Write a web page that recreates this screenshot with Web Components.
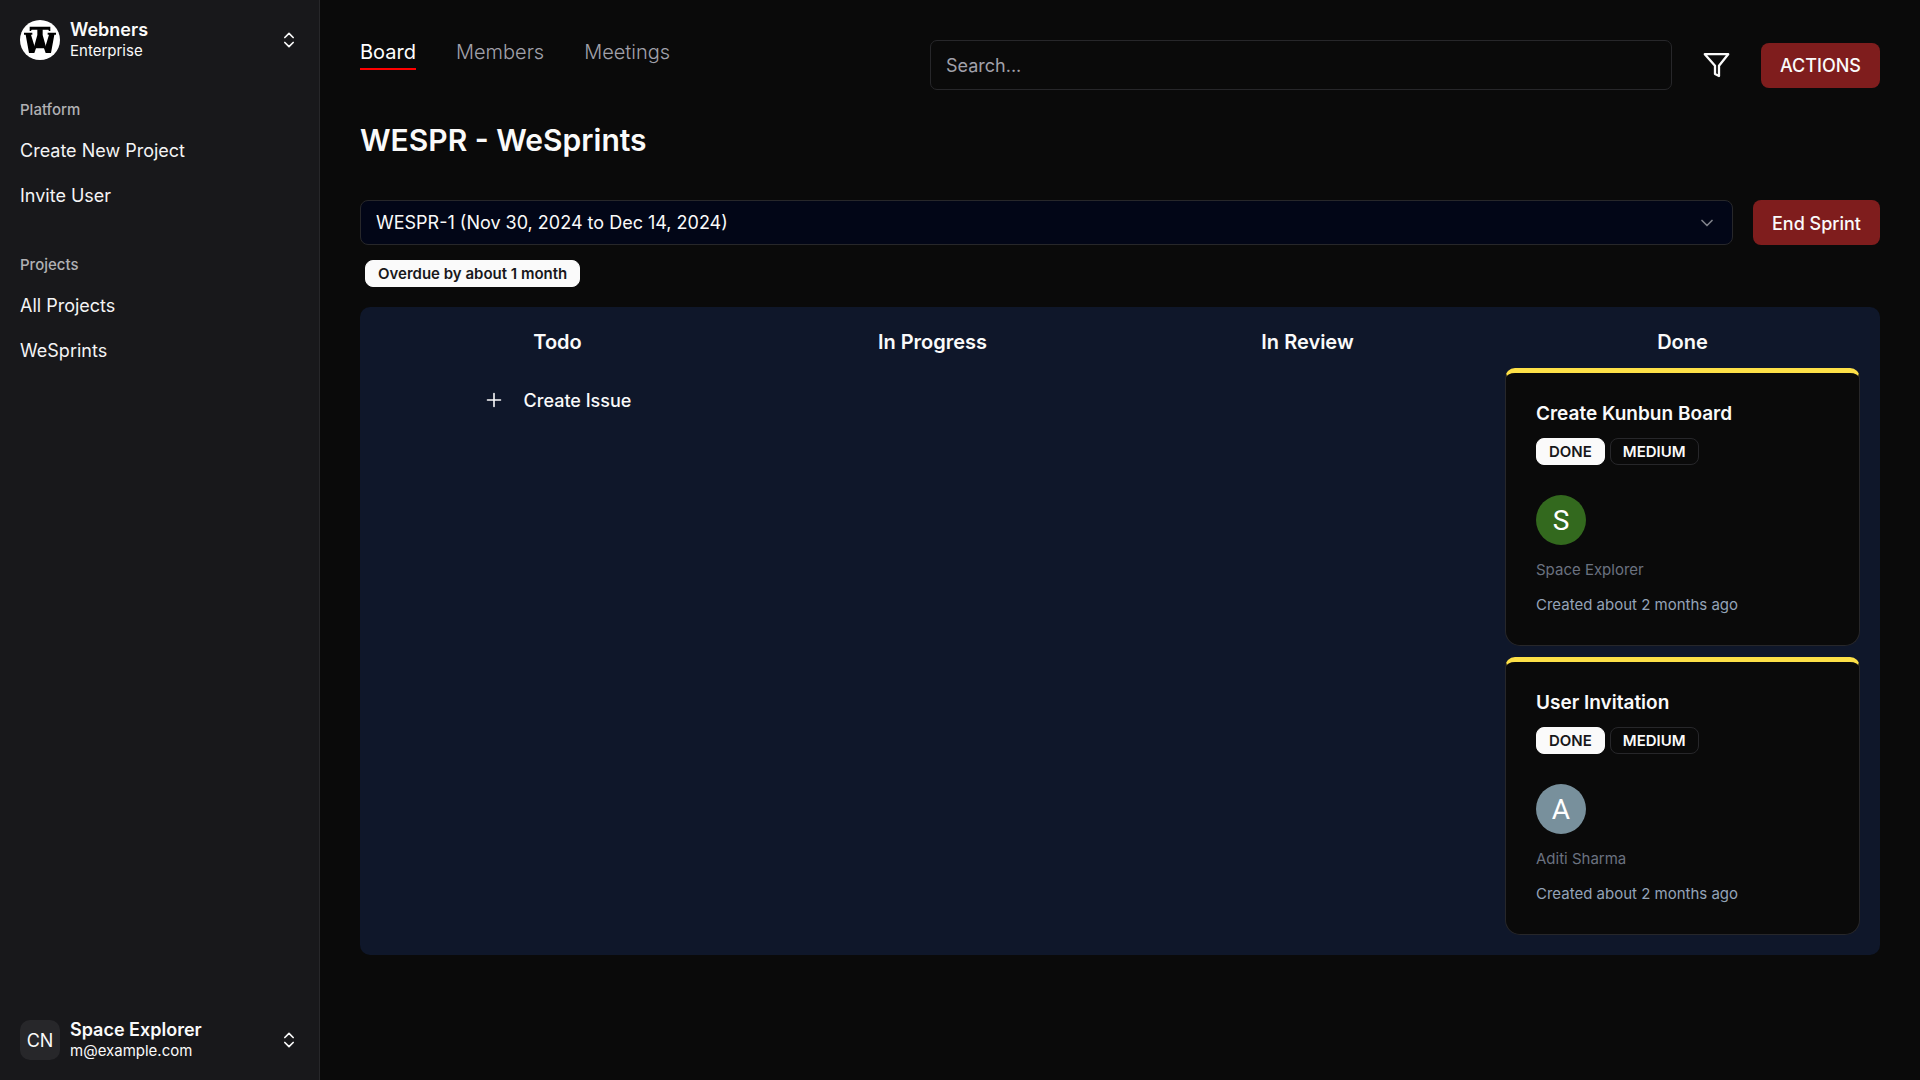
<!DOCTYPE html>
<html lang="en">
<head>
<meta charset="utf-8">
<title>WeSprints</title>
<style>
html, body { margin: 0; }
body { background: #0a0a0a; color: #fafafa; font-family: Inter, "Liberation Sans", sans-serif; font-size: 18px; line-height: 25px; }
</style>
</head>
<body>
<app-shell>
  <app-sidebar slot="sidebar">
    <account-switcher slot="header" name="Webners" detail="Enterprise"><brand-logo></brand-logo></account-switcher>
    <nav-group label="Platform">
      <nav-item>Create New Project</nav-item>
      <nav-item>Invite User</nav-item>
    </nav-group>
    <nav-group label="Projects">
      <nav-item>All Projects</nav-item>
      <nav-item>WeSprints</nav-item>
    </nav-group>
    <account-switcher slot="footer" name="Space Explorer" detail="m@example.com"><initials-box>CN</initials-box></account-switcher>
  </app-sidebar>
  <board-toolbar>
    <tab-link slot="tabs" active>Board</tab-link>
    <tab-link slot="tabs">Members</tab-link>
    <tab-link slot="tabs">Meetings</tab-link>
    <action-button slot="actions">ACTIONS</action-button>
  </board-toolbar>
  <page-title>WESPR - WeSprints</page-title>
  <sprint-bar sprint="WESPR-1 (Nov 30, 2024 to Dec 14, 2024)">
    <action-button slot="action">End Sprint</action-button>
    <ui-badge slot="status">Overdue by about 1 month</ui-badge>
  </sprint-bar>
  <kanban-board>
    <kanban-column heading="Todo"><create-issue>Create Issue</create-issue></kanban-column>
    <kanban-column heading="In Progress"></kanban-column>
    <kanban-column heading="In Review"></kanban-column>
    <kanban-column heading="Done">
      <issue-card heading="Create Kunbun Board" assignee="Space Explorer" color="#33691e" created="Created about 2 months ago">
        <ui-badge slot="badges">DONE</ui-badge><ui-badge slot="badges" outline>MEDIUM</ui-badge>
      </issue-card>
      <issue-card heading="User Invitation" assignee="Aditi Sharma" color="#78909c" created="Created about 2 months ago">
        <ui-badge slot="badges">DONE</ui-badge><ui-badge slot="badges" outline>MEDIUM</ui-badge>
      </issue-card>
    </kanban-column>
  </kanban-board>
</app-shell>

<script>
const base = `<style>
*, *::before { box-sizing: border-box; }
:host { display: block; box-sizing: border-box; }
h1, h2, h3, p { margin: 0; }
button, input, select { font: inherit; color: inherit; margin: 0; }
button { border: 0; background: none; padding: 0; cursor: pointer; }
a { color: inherit; text-decoration: none; }
svg { display: block; flex: none; fill: none; stroke: currentColor; stroke-width: 2; stroke-linecap: round; stroke-linejoin: round; }
</style>`;

const define = (name, render) => customElements.define(name, class extends HTMLElement {
  constructor() { super(); this.attachShadow({ mode: 'open' }); }
  connectedCallback() {
    this.shadowRoot.innerHTML = base + render(key => this.getAttribute(key) || '');
  }
});

define('app-shell', () => `<style>
:host { display: flex; min-height: 100vh; }
main { flex: 1; min-width: 0; padding: 40px; }
</style><slot name="sidebar"></slot><main><slot></slot></main>`);

define('app-sidebar', () => `<style>
:host { display: flex; flex-direction: column; width: 320px; flex: none; background: #18181b; border-right: 1px solid #27272a; }
nav { flex: 1; display: flex; flex-direction: column; gap: 8px; }
</style><slot name="header"></slot><nav><slot></slot></nav><slot name="footer"></slot>`);

define('account-switcher', a => `<style>
:host { padding: 10px; }
button { display: flex; align-items: center; gap: 10px; width: 100%; height: 60px; padding: 10px; text-align: left; }
.text { flex: 1; display: flex; flex-direction: column; }
.name { font-size: 18px; line-height: 22px; font-weight: 600; }
.detail { font-size: 15px; line-height: 20px; }
</style><button type="button"><slot></slot><span class="text"><span class="name">${a('name')}</span><span class="detail">${a('detail')}</span></span>
<svg width="20" height="20" viewBox="0 0 24 24"><path d="m7 15 5 5 5-5M7 9l5-5 5 5"/></svg></button>`);

define('brand-logo', () => `<style>:host { width: 40px; height: 40px; flex: none; }</style>
<svg width="40" height="40" viewBox="0 0 120 120" role="img" aria-label="Webners logo"><circle cx="60" cy="60" r="60" fill="#fff" stroke="none"/>
<g fill="#000" stroke="none">
<path d="M29 20h62v13h-4l-2-4H35l-2 4h-4z"/>
<path d="M52 28h16v17l10 36-4 4H46l-4-4 10-36z"/>
<path d="M12 38h25v6h-4l11 36 8-10h16l8 10 11-36h-4v-6h25v6h-5L93 99H77l-6-17H49l-6 17H27L17 44h-5z"/></g></svg>`);

define('initials-box', () => `<style>
:host { display: flex; align-items: center; justify-content: center; width: 40px; height: 40px; flex: none; border-radius: 10px; background: #27272a; font-size: 18px; }
</style><slot></slot>`);

define('nav-group', a => `<style>
:host { padding: 10px 20px; }
h2 { font-size: 15px; font-weight: 500; line-height: 40px; color: #b0b0b3; }
.items { display: flex; flex-direction: column; gap: 3px; }
</style><h2>${a('label')}</h2><div class="items"><slot></slot></div>`);

define('nav-item', () => `<style>
a { display: block; font-size: 18px; line-height: 42px; color: #f4f4f5; }
</style><a href="#"><slot></slot></a>`);

define('board-toolbar', () => `<style>
:host { display: flex; align-items: center; justify-content: space-between; gap: 20px; }
nav { display: flex; gap: 40px; align-self: flex-start; }
.tools { display: flex; align-items: center; gap: 31px; width: 950px; }
input { flex: 1; min-width: 0; height: 50px; padding: 0 15px; border: 1px solid #27272a; border-radius: 7px; background: transparent; font-size: 18px; }
input::placeholder { color: #a1a1aa; opacity: 1; }
</style><nav><slot name="tabs"></slot></nav><div class="tools"><input type="search" aria-label="Search" placeholder="Search...">
<button type="button" aria-label="Filter"><svg width="27" height="27" viewBox="0 0 27 27"><path d="M1.800 2.200h23.400L16 13.800V24l-4-2v-8.200Z" stroke-width="2.300"/></svg></button><slot name="actions"></slot></div>`);

define('tab-link', () => `<style>
a { display: block; padding-bottom: 3px; border-bottom: 2px solid transparent; font-size: 20px; line-height: 25px; font-weight: 300; color: #a1a1aa; }
:host([active]) a { color: #fff; font-weight: 400; border-color: #f00; }
</style><a href="#"><slot></slot></a>`);

define('action-button', () => `<style>
:host { flex: none; }
button { display: block; height: 45px; padding: 1px 19px 0; border-radius: 8px; background: #7f1d1d; font-size: 18px; font-weight: 500; white-space: nowrap; }
</style><button type="button"><slot></slot></button>`);

define('page-title', () => `<style>
:host { padding: 30px 0 40px; }
h1 { font-size: 30px; line-height: 40px; font-weight: 600; }
</style><h1><slot></slot></h1>`);

define('sprint-bar', a => `<style>
.row { display: flex; gap: 20px; }
.field { flex: 1; display: grid; align-items: center; min-width: 0; }
.field > * { grid-area: 1 / 1; }
select { appearance: none; width: 100%; height: 45px; padding: 0 15px; border: 1px solid #27272a; border-radius: 8px; background: #020617; font-size: 18px; }
svg { justify-self: end; margin-right: 16px; opacity: .5; pointer-events: none; }
.status { display: flex; padding: 15px 5px 20px; }
</style><div class="row"><div class="field"><select aria-label="Sprint"><option>${a('sprint')}</option></select>
<svg width="20" height="20" viewBox="0 0 24 24"><path d="m6 9 6 6 6-6"/></svg></div><slot name="action"></slot></div><div class="status"><slot name="status"></slot></div>`);

define('ui-badge', () => `<style>
:host { padding: 0 12px; border: 1px solid #fafafa; border-radius: 8px; background: #fafafa; color: #18181b; font-size: 15px; line-height: 25px; font-weight: 600; white-space: nowrap; }
:host([outline]) { background: transparent; border-color: #27272a; color: #fafafa; }
</style><slot></slot>`);

define('kanban-board', () => `<style>
:host { display: grid; grid-template-columns: repeat(4, minmax(0, 1fr)); gap: 20px; padding: 20px; border-radius: 10px; background: #0f172a; }
</style><slot></slot>`);

define('kanban-column', a => `<style>
:host { display: flex; flex-direction: column; gap: 11px; }
h2 { font-size: 20px; line-height: 30px; font-weight: 600; text-align: center; }
</style><h2>${a('heading')}</h2><slot></slot>`);

define('create-issue', () => `<style>
button { display: flex; align-items: center; justify-content: center; gap: 20px; width: 100%; height: 64px; font-size: 18px; font-weight: 500; }
</style><button type="button"><svg width="20" height="20" viewBox="0 0 20 20"><path stroke-width="1.600" d="M3.500 10h13M10 3.500v13"/></svg><span><slot></slot></span></button>`);

define('issue-card', a => `<style>
:host { padding: 30px; border: 1px solid #27272a; border-top: 5px solid #fde047; border-radius: 10px 10px 15px 15px; background: #0a0a0a; }
h3 { font-size: 19px; line-height: 22px; font-weight: 600; }
.badges { display: flex; gap: 5px; padding: 13px 0 30px; }
.avatar { display: flex; align-items: center; justify-content: center; width: 50px; height: 50px; border-radius: 50%; padding-top: 2px; font: 28px/48px Roboto, sans-serif; color: #fff; background: ${a('color')}; }
p { font-size: 15px; line-height: 20px; padding-top: 15px; color: #6b7280; }
p.created { color: #94a3b8; }
</style><h3>${a('heading')}</h3><div class="badges"><slot name="badges"></slot></div>
<div class="avatar">${a('assignee')[0]}</div><p>${a('assignee')}</p><p class="created">${a('created')}</p>`);
</script>
</body>
</html>
